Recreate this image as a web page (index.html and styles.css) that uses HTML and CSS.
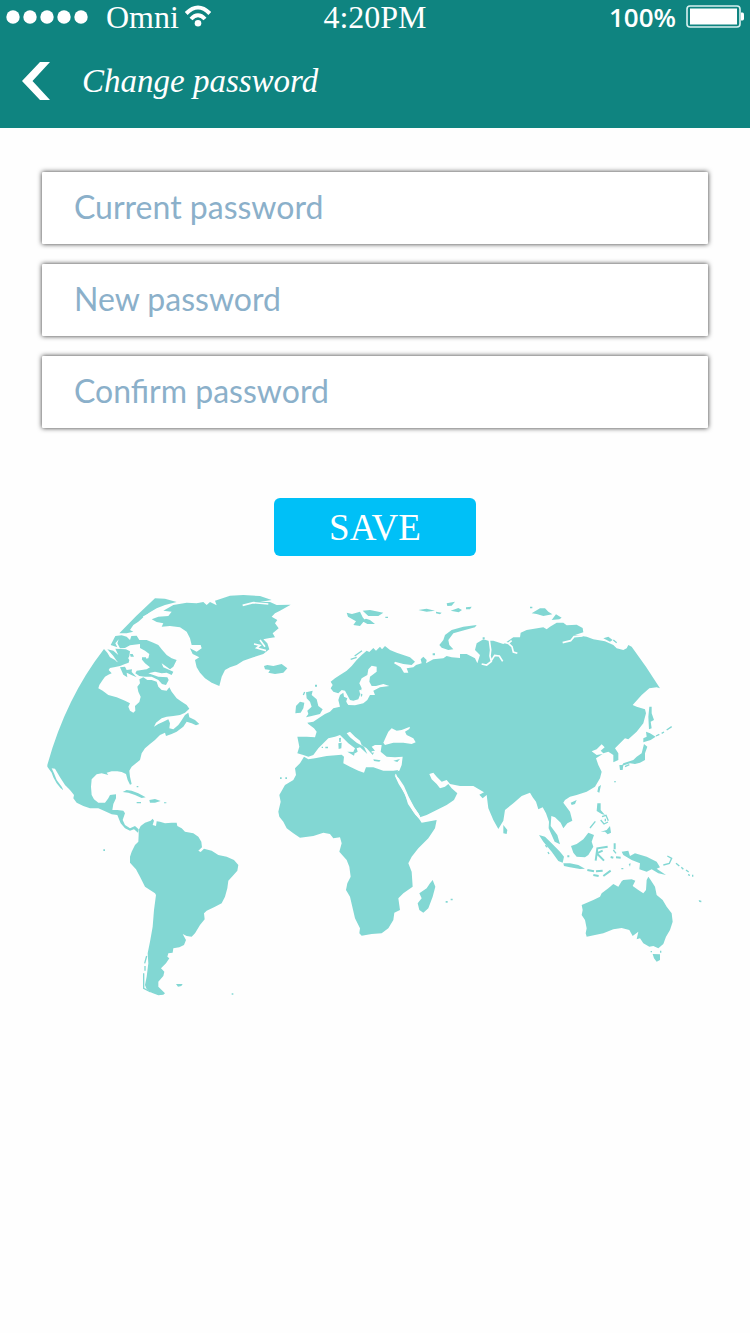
FILE: index.html
```html
<!DOCTYPE html>
<html lang="en">
<head>
<meta charset="utf-8">
<meta name="viewport" content="width=device-width, initial-scale=1">
<title>Change password</title>
<link rel="stylesheet" href="styles.css">
</head>
<body>
<header class="header">
  <div class="status">
    <div class="status-left">
      <svg class="signal" viewBox="0 0 82 14" aria-hidden="true"><circle cx="7" cy="7" r="6.7"/><circle cx="24" cy="7" r="6.7"/><circle cx="41" cy="7" r="6.7"/><circle cx="58" cy="7" r="6.7"/><circle cx="75" cy="7" r="6.7"/></svg>
      <span class="carrier">Omni</span>
      <svg class="wifi" viewBox="0 0 26 24" aria-hidden="true"><g fill="none" stroke="#fff" stroke-width="4"><path d="M1.200 8.500Q13-3.600 24.800 8.500"/><path d="M6 14Q13 6.400 20 14"/></g><circle cx="13" cy="18.200" r="3.300"/></svg>
    </div>
    <span class="time">4:20PM</span>
    <div class="status-right">
      <span class="charge">100%</span>
      <svg class="battery" viewBox="0 0 58 24" aria-hidden="true"><rect x="1" y="1" width="53" height="21" rx="3" fill="none" stroke="#d9f0ef" stroke-width="1.6"/><rect x="4" y="3.5" width="47" height="16" /><path d="M55 7.500h1.500q1.500 0 1.500 2v4q0 2-1.500 2H55z"/></svg>
    </div>
  </div>
  <div class="titlebar">
    <button class="back" type="button" aria-label="Back"><svg viewBox="0 0 28 38" aria-hidden="true"><path d="M18 0h10L10.500 19 28 38H18L0 19z"/></svg></button>
    <h1 class="title">Change password</h1>
  </div>
</header>
<main class="main">
  <form class="form">
    <input class="field" type="password" placeholder="Current password" aria-label="Current password">
    <input class="field" type="password" placeholder="New password" aria-label="New password">
    <input class="field" type="password" placeholder="Confirm password" aria-label="Confirm password">
    <button class="save" type="submit">SAVE</button>
  </form>
  <svg class="map" viewBox="40 590 670 412" role="img" aria-label="World map">
    <!-- Americas, Greenland and Iceland -->
    <g transform="translate(30 580) scale(.33333)">
      <path d="M52 555Q107 355 222 207L232 218 240 232 255 240 262 247 270 238 275 222 290 228 298 240 296 248 285 252 270 258 252 262 240 264 236 270 245 280 235 284 225 290 218 300 208 315 205 325 218 332 235 345 260 352 285 362 300 370 295 380 300 392 310 398 316 392 315 378 328 366 332 350 325 335 322 320 330 310 328 298 340 292 352 300 365 300 380 305 385 320 395 330 410 332 418 322 425 335 440 355 455 365 470 375 478 386 465 398 450 405 430 408 410 410 395 415 378 428 372 440 385 432 400 425 415 418 420 430 418 445 430 448 445 435 452 425 465 405 475 398 478 412 495 420 508 432 498 436 485 430 470 425 460 440 440 455 425 462 408 468 405 458 390 465 375 480 360 492 345 505 335 520 330 540 318 550 305 560 298 572 300 590 305 612 300 614 293 600 288 582 275 576 262 574 245 574 230 578 235 585 215 580 200 583 185 598 183 620 185 645 192 658 205 668 225 668 235 655 240 645 258 643 258 655 250 672 247 690 262 690 280 692 285 700 278 720 285 735 300 745 315 738 326 748 324 758 312 748 300 752 285 745 272 730 268 720 262 705 245 703 222 692 205 685 180 685 160 678 140 668 130 655 132 645 120 630 105 615 90 592 75 566 65 565 72 580 80 600 95 620 100 630 92 625 80 610 70 592 65 578 52 560Z"/>
      <path d="M326 750L332 738 345 728 362 722 368 716 372 722 368 735 378 738 380 724 390 725 405 730 425 728 440 728 442 738 455 745 465 755 490 760 505 770 514 785 516 802 505 812 512 816 522 806 545 812 565 825 590 830 612 840 625 855 622 872 608 888 595 902 592 925 585 950 575 970 555 980 530 992 522 1000 524 1018 510 1035 495 1060 485 1070 470 1068 458 1062 468 1080 462 1095 448 1102 430 1105 428 1118 415 1120 412 1130 418 1135 408 1150 393 1165 403 1175 400 1188 385 1205 385 1220 405 1240 400 1244 385 1246 365 1238 350 1228 345 1215 350 1190 355 1150 353 1120 360 1085 368 1040 372 990 378 945 375 940 345 920 330 890 318 868 300 848 300 830 305 815 315 795 325 785 326 765Z"/>
      <path d="M375 55L405 56 440 66 405 75 380 85 360 97 340 112 325 125 310 135 300 150 310 155 290 160 268 160Q318 107 375 55ZM256 168L275 166 290 170 300 180 304 168 320 167 328 180 350 180 370 188 385 195 395 208 410 225 425 235 440 240 430 260 420 268 395 250 400 262 430 275 425 285 410 278 395 280 375 275 355 280 385 290 412 292 416 300 408 315 396 312 385 300 365 290 345 290 328 288 316 280 320 272 350 268 360 262 345 250 335 238 355 235 358 222 345 212 330 204 330 192 300 196 285 204 270 205 262 190 266 178 256 190 262 202 242 195ZM232 208L250 212 265 225 256 206 288 208 300 214 298 228 292 240 275 246 262 245 250 228ZM270 262L285 260 290 270 306 268 305 276 320 292 306 286 290 278 292 292 280 284ZM300 222L308 222 312 230 302 230ZM336 232h12v6h-12z"/>
      <path d="M365 118L385 110 415 108 425 95 400 92 430 75 470 68 500 70 520 66 530 75 540 66 560 76 555 62 600 47 640 45 690 48 725 60 690 66 720 66 740 75 782 74 750 92 735 100 725 110 742 120 735 130 746 145 728 160 735 172 715 175 700 178 712 190 718 208 700 222 670 232 640 242 620 255 600 262 585 270 575 290 568 318 545 308 525 295 510 278 500 262 495 240 508 232 488 222 480 205 500 215 515 205 512 195 485 195 480 175 470 155 450 142 420 138 395 140 400 130 380 126ZM702 258L712 255 730 258 755 252 772 265 760 278 735 282 715 278 720 270 705 268ZM278 636L290 630 305 632 325 640 347 652 335 654 315 645 295 638ZM358 660L375 657 392 663 375 668 360 668ZM320 666h13v4h-13zM402 667h7v3h-7zM438 1212L458 1212 454 1218 444 1220ZM220 808h5v5h-5zM605 1240h5v4h-5zM320 618h5v4h-5z"/>
      <path class="coast" d="M638 76L670 68 715 72M672 192L690 196 680 204 708 212M690 180L705 200M340 112L380 90"/>
      <path class="isles" d="M350 1128L344 1150M345 1158V1172M341 1180V1225L362 1236"/>
    </g>
    <!-- Europe, Asia and Africa -->
    <g transform="translate(260 580) scale(.33333)">
      <path d="M112 470L140 470 165 472 170 455 162 445 145 432 142 428 160 425 180 412 195 402 210 395 220 385 240 380 235 360 240 345 250 338 252 350 262 355 258 365 265 375 285 376 310 370 322 360 330 345 345 345 340 332 360 322 388 318 370 312 348 318 335 318 328 305 330 290 350 275 350 260 335 257 325 268 322 285 305 295 298 310 305 325 300 345 295 358 280 362 270 360 262 345 255 332 245 330 235 340 220 335 212 325 218 315 212 305 225 295 240 285 260 272 275 258 290 240 305 225 320 212 328 216 340 204 348 212 360 200 366 208 375 198 390 210 410 218 430 225 450 232 465 245 455 255 430 252 405 245 402 250 422 262 432 278 445 278 440 265 460 262 468 255 485 250 482 238 490 230 500 240 498 250 520 238 550 235 560 228 575 232 600 234 600 222 620 222 645 235 652 250 660 225 645 210 650 190 670 178 685 182 700 182 730 192 745 182 760 172 780 172 782 158 800 150 850 142 860 148 870 140 890 128 910 128 920 136 950 134 968 144 970 157 945 165 980 170 1000 178 1035 184 1060 195 1070 205 1090 210 1100 205 1105 195 1115 200Q1160 260 1200 325L1190 322 1168 325 1145 345 1118 375 1130 380 1155 388 1158 400 1150 430 1130 455 1105 478 1095 475 1065 505 1075 520 1075 540 1060 547 1060 525 1045 515 1030 520 1022 512 1034 502 1025 493 1010 508 995 514 1010 525 1028 522 1008 535 1015 555 1025 575 1020 595 1005 620 980 635 950 645 930 650 915 660 910 668 930 695 937 722 922 730 910 745 902 728 885 712 874 708 872 738 892 765 900 793 884 785 866 745 867 725 858 700 848 682 835 688 828 665 818 652 810 638 785 648 760 670 735 690 730 722 715 747 700 720 685 685 680 645 668 655 658 644 672 637 640 618 600 618 570 612 560 600 545 605 530 590 520 578 508 582 515 598 530 612 540 625 555 620 565 612 575 625 592 640 582 660 560 675 530 690 500 705 480 712 475 700 460 680 445 650 430 620 412 590 405 575 418 572 425 555 428 530 405 532 380 530 362 515 365 495 345 495 335 500 345 512 338 525 320 505 305 495 300 482 285 470 270 455 260 460 270 472 290 488 312 500 322 522 300 502 290 505 293 515 285 520 280 515 285 505 265 490 250 475 240 465 225 470 205 475 190 490 175 505 160 525 145 530 130 525 112 520 118 500Z"/>
      <path d="M132 530L145 538 165 535 200 528 245 524 252 530 250 550 270 560 295 572 312 578 318 562 340 562 370 572 400 572 415 570 405 585 420 615 440 655 445 668 460 695 478 718 485 728 530 720 525 745 505 775 475 805 455 830 445 850 455 875 458 920 430 940 415 955 420 990 403 998 400 1020 385 1045 365 1060 335 1062 305 1067 298 1060 300 1045 285 1015 278 985 270 950 258 930 262 910 272 890 268 860 260 840 238 815 245 790 240 772 220 775 210 762 190 758 160 768 120 773 100 760 80 745 70 725 58 710 55 695 62 665 58 645 75 615 100 600 108 585 105 565 120 550Z"/>
      <path class="sea" d="M385 455L395 445 410 452 425 450 450 440 448 447 435 455 440 465 460 475 467 487 455 492 430 488 400 488 375 495 370 488 378 470ZM404 586L416 594 432 618 446 650 462 680 480 708 482 720 466 704 444 672 434 640 416 612Z"/>
      <path class="coast" d="M688 180L692 210 690 228 694 244 680 255 665 252M694 242L704 226 718 228 728 244M728 186L745 190 756 200 760 216 772 220M745 190L755 182M908 188L932 182 942 170 968 168M335 516L350 514M300 330L305 350"/>
      <path d="M518 900L526 920 518 950 505 985 490 998 478 990 473 970 485 955 478 940 500 925 510 910ZM138 337L158 332 155 345 170 358 175 378 188 388 180 402 155 408 138 412 145 402 142 392 155 380 150 365 140 355ZM108 378L120 365 133 368 130 385 122 398 106 400ZM260 98L276 102 300 95 308 112 315 120 300 138 280 135 288 124 264 110ZM308 92L330 90 370 98 355 108 325 108ZM305 122L318 116 330 120 345 132 322 132ZM475 90L500 86 525 92 500 95ZM560 70L585 65 575 77 562 78ZM528 95L545 98 540 103 528 100ZM572 92L595 84 606 90 596 97ZM618 82L635 80 630 88 618 88ZM650 135L645 142 615 150 580 160 565 180 568 195 580 208 565 210 545 203 538 195 550 180 555 165 575 150 610 140ZM235 490L245 488 244 505 236 507ZM237 475L243 473 242 486 238 486ZM262 515L285 516 282 527ZM340 538L362 541 358 545 342 543ZM400 542L420 537 412 546ZM250 358L258 360 260 372 250 370ZM302 340L308 344 303 352ZM518 220h7v6h-7zM196 500h8v5h-8zM557 963h6v5h-6zM572 956h6v5h-6zM60 592h5v5h-5zM76 592h5v5h-5zM165 314h6v6h-6zM376 110h8v4h-8zM668 172h6v5h-6z"/>
      <path class="isles" d="M272 238L290 232M284 228L306 212M130 345L134 336M185 502h4"/>
    </g>
    <!-- Pacific islands and Australia -->
    <g transform="translate(480 580) scale(.33333)">
      <path d="M155 100L180 85 195 85 205 95 217 103 190 108 170 102ZM215 120L228 103 245 113 238 118ZM370 175L385 170 398 180 390 185ZM508 380L515 380 515 400 522 420 512 425 515 445 507 448 505 410ZM498 455L510 460 527 470 512 480 490 487 490 475 500 470ZM492 492L502 500 495 520 495 540 480 548 465 552 450 550 425 558 430 550 460 540 470 530 485 520ZM418 555L430 555 428 570 420 570ZM355 620L363 615 358 638 352 635ZM272 668L290 660 285 672 275 675ZM70 735L82 750 80 762 70 760ZM177 765L195 770 215 790 240 815 252 830 248 848 235 843 215 815 190 785ZM250 850L270 850 295 855 315 866 300 867 270 862 252 858ZM273 798L290 792 310 778 325 758 342 765 335 785 340 800 325 825 315 832 290 830 280 818ZM352 670L362 670 362 690 375 705 365 702 350 693ZM362 755L380 750 390 738 393 758 383 763 375 755ZM425 815L445 812 450 828 465 820 500 830 530 845 540 862 530 866 558 885 535 880 515 868 500 875 478 868 480 850 455 840 430 825ZM518 1122L540 1123 540 1140 530 1145 522 1135ZM656 960L664 962 664 967 658 966ZM446 852L452 850 450 860ZM150 80h7v5h-7zM402 604h6v3h-6z"/>
      <path d="M305 975L340 960 360 950 365 940 385 925 400 912 415 920 425 904 430 900 455 898 466 902 458 918 475 930 490 940 498 930 500 900 505 890 512 900 525 920 530 945 548 960 560 980 575 1000 578 1025 570 1050 558 1070 550 1092 535 1105 520 1098 508 1100 490 1090 480 1075 470 1078 475 1055 458 1068 448 1050 425 1044 400 1048 370 1060 345 1065 320 1070 317 1060 320 1045 315 1020 305 1005 308 990Z"/>
      <path class="isles" d="M528 468L538 463M545 460L552 456M560 450L575 440M435 560L448 554M400 180L410 188M330 744L346 724M366 710L378 706 385 722M362 720L372 732 384 726M376 716V724"/>
      <path class="isles wide" d="M383 800L352 805 347 842M350 820L372 842M350 820L368 812M322 870L342 874M348 874L368 872M370 888L392 872M404 790V808M392 831L400 833M408 832L422 833M340 885L356 888M265 826V832"/>
      <path class="isles" d="M550 855L568 850 575 835 562 828M588 850L598 858M604 862L610 868M618 870L626 876M624 884L630 886M638 884V890M196 796L202 802M204 816L207 822M512 1115h4M542 1112v6M424 866h6M400 810L408 820"/>
    </g>
  </svg>
</main>
</body>
</html>
```
FILE: styles.css
```css
* {
  box-sizing: border-box;
}

body {
  margin: 0;
  min-height: 100vh;
  background: #fefefe;
  font-family: "Liberation Serif", serif;
}

svg {
  display: block;
}

.header {
  background: #0f8480;
  color: #fff;
  height: 128px;
}

.header svg {
  fill: #fff;
}

.status {
  display: grid;
  grid-template-columns: 1fr auto 1fr;
  align-items: center;
  height: 34px;
  padding: 0 6px;
}

.status-left,
.status-right {
  display: flex;
  align-items: center;
}

.status-right {
  justify-content: flex-end;
  gap: 10px;
}

.signal {
  width: 82px;
}

.carrier {
  margin: 0 6px 0 18px;
}

.carrier,
.time {
  font-size: 32px;
  line-height: 34px;
}

.wifi {
  width: 26px;
}

.charge {
  font: 600 26px/34px "Open Sans", sans-serif;
}

.battery {
  width: 58px;
}

.titlebar {
  display: flex;
  align-items: center;
  gap: 32px;
  height: 94px;
  padding: 0 22px;
}

.back {
  padding: 0;
  border: 0;
  background: none;
  cursor: pointer;
}

.back svg {
  width: 28px;
}

.title {
  margin: 0;
  font-size: 33px;
  font-style: italic;
  font-weight: 400;
  line-height: 40px;
}

.main {
  padding: 44px 40px 40px;
}

.form {
  display: flex;
  flex-direction: column;
  gap: 20px;
  padding: 0 2px;
}

.field {
  width: 100%;
  height: 72px;
  padding: 0 32px 4px;
  border: 0;
  border-radius: 1px;
  background: #fff;
  box-shadow: 0 0 5px #333;
  color: #8bb0ca;
  font: 32px Lato, sans-serif;
}

.field::placeholder {
  color: #8bb0ca;
  opacity: 1;
}

.save {
  align-self: center;
  width: 202px;
  height: 58px;
  margin-top: 50px;
  padding: 0;
  border: 0;
  border-radius: 6px;
  background: #00c0f7;
  color: #fff;
  font: 37px "Liberation Serif", serif;
  cursor: pointer;
}

.map {
  width: 100%;
  margin-top: 34px;
  fill: #82d7d3;
}

.sea {
  fill: #fefefe;
}

.coast {
  fill: none;
  stroke: #fefefe;
  stroke-width: 5;
}

.isles {
  fill: none;
  stroke: #82d7d3;
  stroke-width: 4;
}

.wide {
  stroke-width: 6;
}
```
